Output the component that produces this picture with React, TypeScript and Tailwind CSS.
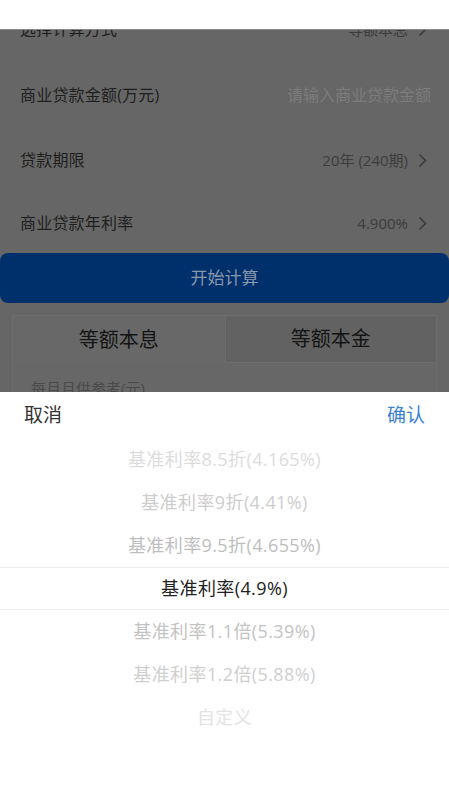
import React from 'react';

const font = { fontFamily: '"Open Sans", "Noto Sans", "Noto Sans CJK SC", sans-serif' };

function Chevron() {
  return (
    <svg width="9" height="15" viewBox="0 0 9 15" className="ml-[10px] shrink-0">
      <path d="M1.5 1.5 L7.5 7.5 L1.5 13.5" fill="none" stroke="#3a3a3a" strokeWidth="1.6" />
    </svg>
  );
}

function FormRow({ label, value, h, placeholder, arrow = true }: { label: string; value: string; h: string; placeholder?: boolean; arrow?: boolean }) {
  return (
    <div className={`flex items-center justify-between pl-[20px] ${arrow ? 'pr-[22px]' : 'pr-[18px]'} ${h}`}>
      <span className="text-[16px] tracking-[0.2px] text-[#1e1e1e]">{label}</span>
      <div className="flex items-center">
        <span className={placeholder ? 'text-[16px] text-[#7c7c7c]' : 'text-[15px] text-[#3c3c3c]'}>{value}</span>
        {arrow && <Chevron />}
      </div>
    </div>
  );
}

const options = [
  { text: '基准利率8.5折(4.165%)', color: 'text-[#dcdcdc]' },
  { text: '基准利率9折(4.41%)', color: 'text-[#cdcdcd]' },
  { text: '基准利率9.5折(4.655%)', color: 'text-[#bebebe]' },
  { text: '基准利率(4.9%)', color: 'text-[#222222]', selected: true },
  { text: '基准利率1.1倍(5.39%)', color: 'text-[#c3c3c3]' },
  { text: '基准利率1.2倍(5.88%)', color: 'text-[#cfcfcf]' },
  { text: '自定义', color: 'text-[#e3e3e3]' },
];

export default function App() {
  return (
    <div className="relative w-[449px] h-[800px] overflow-hidden bg-[#666666]" style={font}>
      {/* white strip at the very top */}
      <div className="absolute top-0 left-0 right-0 h-[30px] bg-white border-b border-[#8a8a8a] z-10" />

      {/* dimmed page behind the sheet */}
      <div className="flex flex-col mt-[-4px]">
        <FormRow label="选择计算方式" value="等额本息" h="h-[66px]" />
        <FormRow label="商业贷款金额(万元)" value="请输入商业贷款金额" h="h-[66px]" placeholder arrow={false} />
        <FormRow label="贷款期限" value="20年 (240期)" h="h-[64px]" />
        <FormRow label="商业贷款年利率" value="4.900%" h="h-[62px]" />

        <button className="mt-[-1px] h-[50px] w-full rounded-lg bg-[#00306c] text-[17px] text-[#8b97ab]">
          开始计算
        </button>

        <div className="mx-[12px] mt-[12px] border border-[#6d6d6d] bg-[#676767]">
          <div className="grid grid-cols-2 h-[47px]">
            <div className="flex items-center justify-center text-[20px] text-[#141414] bg-[#686868]">等额本息</div>
            <div className="flex items-center justify-center text-[20px] text-[#141414] bg-[#626262] border-l border-b border-[#6d6d6d]">等额本金</div>
          </div>
          <div className="px-[18px] pt-[14px] pb-[40px] text-[15px] text-[#4a4a4a]">每月月供参考(元)</div>
        </div>
      </div>

      {/* picker sheet */}
      <div className="absolute left-0 right-0 bottom-0 h-[408px] bg-white flex flex-col">
        <div className="flex items-center justify-between h-[46px] px-[24px]">
          <span className="text-[19px] text-[#333333]">取消</span>
          <span className="text-[19px] text-[#3b7fd4]">确认</span>
        </div>
        <div className="flex flex-col">
          {options.map(o => (
            <div
              key={o.text}
              className={`h-[43px] flex items-center justify-center text-[18px] tracking-[0.4px] ${o.color} ${
                o.selected ? 'border-y border-[#ececec]' : ''
              }`}
            >
              {o.text}
            </div>
          ))}
        </div>
      </div>
    </div>
  );
}
